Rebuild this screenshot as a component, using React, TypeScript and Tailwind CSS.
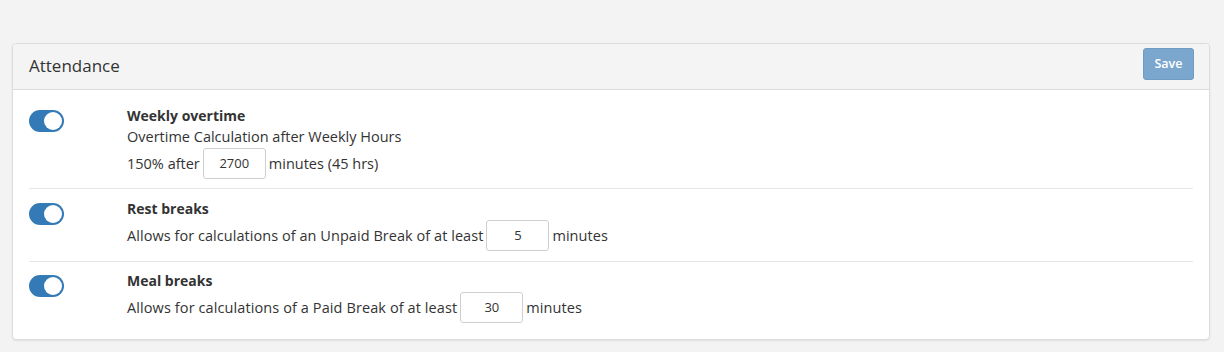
import React from "react";

function Toggle() {
  return (
    <div className="w-[35px] h-[22px] rounded-full bg-[#337ab7] flex items-center justify-end pr-[2px] shrink-0">
      <div className="w-[18px] h-[18px] rounded-full bg-white" />
    </div>
  );
}

function NumInput({ value }: { value: string }) {
  return (
    <div className="w-[63px] h-[31px] border border-[#cfcfcf] rounded-[3px] bg-white flex items-center justify-center text-[13px] text-[#333] mx-[3px] tracking-normal">
      {value}
    </div>
  );
}

export default function App() {
  return (
    <div className="min-h-[352px] w-[1224px] bg-[#f3f3f3] pt-[43px] px-[12px] pb-[12px] text-[#333] font-['Open_Sans',sans-serif]">
      <div className="w-[1198px] bg-white border border-[#dcdcdc] rounded-[4px] shadow-[0_1px_2px_rgba(0,0,0,0.08)]">
        <div className="h-[46px] bg-[#f4f4f4] border-b border-[#dcdcdc] flex items-start justify-between pl-[16px] pr-[15px] rounded-t-[4px]">
          <span className="text-[17px] text-[#333] mt-[11px] leading-[22px]">Attendance</span>
          <button className="mt-[4px] w-[51px] h-[32px] rounded-[3px] bg-[#7ba7cf] border border-[#6f9cc6] text-white text-[12.5px] font-semibold">Save</button>
        </div>
        <div className="px-[16px] pb-[16px]">
          <div className="flex pt-[20px] pb-[9px] border-b border-[#e6e6e6]">
            <div className="w-[98px] shrink-0"><Toggle /></div>
            <div className="flex flex-col text-[14.5px]">
              <div className="font-bold text-[14px] leading-[18px] mt-[-3px]">Weekly overtime</div>
              <div className="leading-[20px] mt-[2px]">Overtime Calculation after Weekly Hours</div>
              <div className="flex items-center mt-[1px]">
                <span>150% after</span>
                <NumInput value="2700" />
                <span>minutes (45 hrs)</span>
              </div>
            </div>
          </div>
          <div className="flex pt-[14px] pb-[10px] border-b border-[#e6e6e6]">
            <div className="w-[98px] shrink-0"><Toggle /></div>
            <div className="flex flex-col text-[14.5px]">
              <div className="font-bold text-[14px] leading-[18px] mt-[-3px]">Rest breaks</div>
              <div className="flex items-center mt-[2px] tracking-[0.05px]">
                <span>Allows for calculations of an Unpaid Break of at least</span>
                <NumInput value="5" />
                <span>minutes</span>
              </div>
            </div>
          </div>
          <div className="flex pt-[13px]">
            <div className="w-[98px] shrink-0"><Toggle /></div>
            <div className="flex flex-col text-[14.5px]">
              <div className="font-bold text-[14px] leading-[18px] mt-[-3px]">Meal breaks</div>
              <div className="flex items-center mt-[2px] tracking-[0.1px]">
                <span>Allows for calculations of a Paid Break of at least</span>
                <NumInput value="30" />
                <span>minutes</span>
              </div>
            </div>
          </div>
        </div>
      </div>
    </div>
  );
}
